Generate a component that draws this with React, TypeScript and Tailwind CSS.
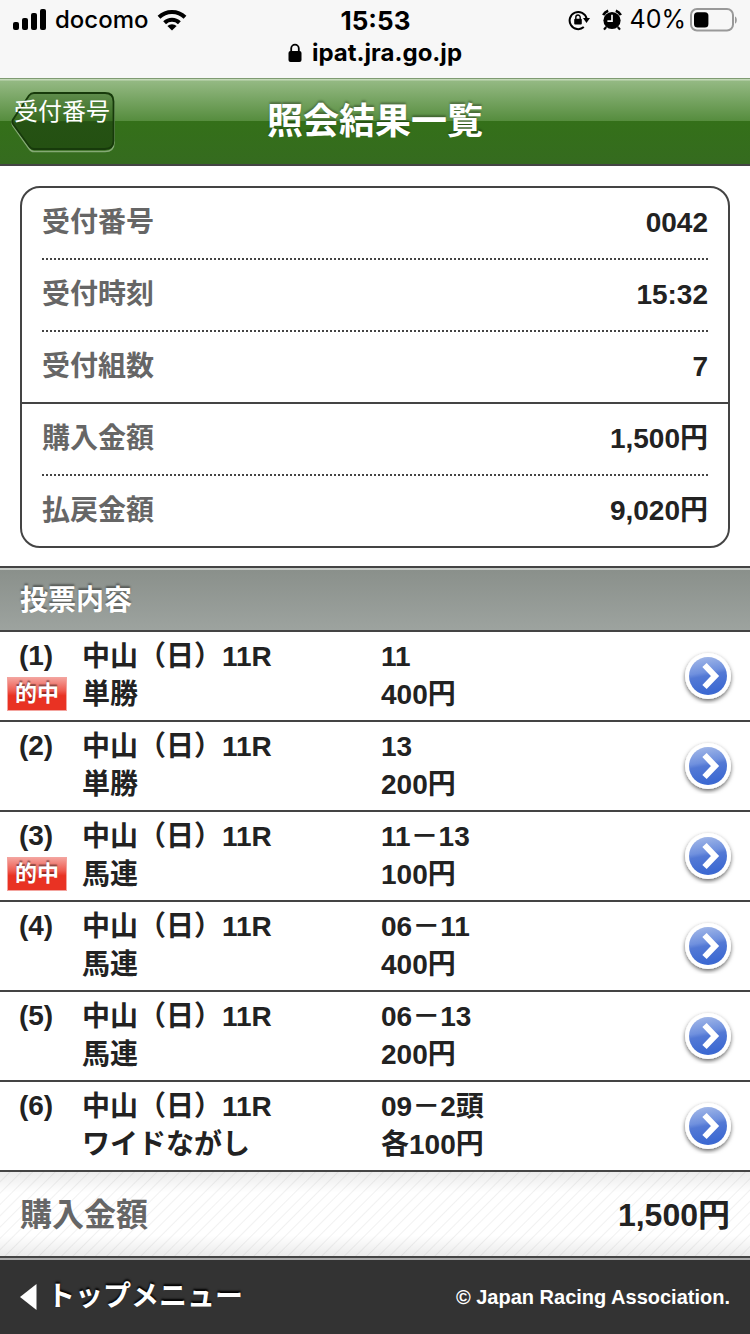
import type { ReactNode } from "react";

const jp = "font-['Liberation_Sans','Noto_Sans_CJK_JP',sans-serif]";

type Bet = {
  no: number;
  hit?: boolean;
  race: string;
  kind: string;
  pick: string;
  amount: string;
};

const bets: Bet[] = [
  { no: 1, hit: true, race: "中山（日）11R", kind: "単勝", pick: "11", amount: "400円" },
  { no: 2, race: "中山（日）11R", kind: "単勝", pick: "13", amount: "200円" },
  { no: 3, hit: true, race: "中山（日）11R", kind: "馬連", pick: "11－13", amount: "100円" },
  { no: 4, race: "中山（日）11R", kind: "馬連", pick: "06－11", amount: "400円" },
  { no: 5, race: "中山（日）11R", kind: "馬連", pick: "06－13", amount: "200円" },
  { no: 6, race: "中山（日）11R", kind: "ワイドながし", pick: "09－2頭", amount: "各100円" },
];

function SignalIcon() {
  return (
    <svg viewBox="0 0 34 22" className="h-[22px] w-[34px]" aria-hidden="true">
      <rect x="0" y="13" width="6" height="8" rx="2" />
      <rect x="9" y="9" width="6" height="12" rx="2" />
      <rect x="18" y="4" width="6" height="17" rx="2" />
      <rect x="27" y="0" width="6" height="21" rx="2" />
    </svg>
  );
}

function WifiIcon() {
  return (
    <svg viewBox="0 0 30 22" className="h-[22px] w-[30px]" aria-hidden="true">
      <path d="M15 21.5 10.4 17a6.6 6.6 0 0 1 9.2 0Z" />
      <path d="M7.6 13.8a10.6 10.6 0 0 1 14.8 0" fill="none" stroke="#000" strokeWidth="4" />
      <path d="M2 8.2a18.6 18.6 0 0 1 26 0" fill="none" stroke="#000" strokeWidth="4" />
    </svg>
  );
}

function RotationLockIcon() {
  return (
    <svg viewBox="0 0 22 22" className="h-[22px] w-[22px]" aria-hidden="true">
      <path d="M15.8 18.1A8.6 8.6 0 1 1 18.6 9.5" fill="none" stroke="#000" strokeWidth="2" />
      <path d="M15 9h7l-3.5 5Z" />
      <rect x="6.2" y="9.8" width="7.6" height="5.8" rx="1" />
      <path d="M7.8 10V8.2a2.2 2.2 0 0 1 4.4 0V10" fill="none" stroke="#000" strokeWidth="1.4" />
    </svg>
  );
}

function AlarmIcon() {
  return (
    <svg viewBox="0 0 20 22" className="h-[22px] w-5" aria-hidden="true">
      <circle cx="10" cy="11.5" r="8.6" />
      <path d="M4.2 18 2 20.6M15.8 18l2.2 2.6" stroke="#000" strokeWidth="2.2" />
      <path d="M1.2 6.2A9 9 0 0 1 6.2 1.8M13.8 1.8a9 9 0 0 1 5 4.4" fill="none" stroke="#000" strokeWidth="2.6" />
      <path d="M10 5.8v6.4H5.4" fill="none" stroke="#f7f7f7" strokeWidth="1.7" />
    </svg>
  );
}

function BatteryIcon() {
  return (
    <svg viewBox="0 0 48 24" className="h-6 w-12" aria-hidden="true">
      <rect x="1" y="1" width="42" height="21.5" rx="6" fill="none" stroke="#999" strokeWidth="2" />
      <rect x="4" y="4.2" width="14.4" height="15.2" rx="3.5" />
      <path d="M45 8.4c2.4 .8 2.4 6.4 0 7.2Z" fill="#999" />
    </svg>
  );
}

function LockIcon() {
  return (
    <svg viewBox="0 0 14 20" className="h-5 w-3.5" aria-hidden="true">
      <rect x="0.5" y="8" width="13" height="11" rx="2" />
      <path d="M3.2 9V5.5a3.8 3.8 0 0 1 7.6 0V9" fill="none" stroke="#000" strokeWidth="1.8" />
    </svg>
  );
}

function BackShape() {
  return (
    <svg viewBox="0 0 106 62" className="absolute inset-0 size-full" aria-hidden="true">
      <defs>
        <linearGradient id="back" x1="0" y1="0" x2="0" y2="1">
          <stop offset="0" stopColor="#5f8d4c" />
          <stop offset="0.5" stopColor="#376b20" />
          <stop offset="0.51" stopColor="#255213" />
          <stop offset="1" stopColor="#245012" />
        </linearGradient>
      </defs>
      <path
        d="M24 3.5h71q9 0 9 9v39q0 9-9 9H24q-3 0-5-3L3 35q-2-3 0-6L19 6q2-2.5 5-2.5Z"
        fill="none"
        stroke="#84a974"
        strokeWidth="1.5"
      />
      <path
        d="M24 2h71q8.5 0 8.5 8.5v39q0 8.5-8.5 8.5H24q-3 0-5-3L3 33q-1.5-2 0-4.5L19 4.5Q21 2 24 2Z"
        fill="url(#back)"
        stroke="#173a0b"
        strokeWidth="1.8"
      />
    </svg>
  );
}

function GoIcon() {
  return (
    <svg viewBox="0 0 56 56" className="size-14" aria-hidden="true">
      <defs>
        <linearGradient id="disc" x1="0" y1="0" x2="0.2" y2="1">
          <stop offset="0" stopColor="#a9bde9" />
          <stop offset="0.46" stopColor="#6f90de" />
          <stop offset="0.56" stopColor="#5379d5" />
          <stop offset="1" stopColor="#3c69d2" />
        </linearGradient>
        <filter id="shade" x="-20%" y="-20%" width="140%" height="150%">
          <feDropShadow dx="0" dy="2" stdDeviation="2" floodColor="#000" floodOpacity="0.6" />
        </filter>
      </defs>
      <circle cx="28" cy="28" r="23" fill="#fff" filter="url(#shade)" />
      <circle cx="28" cy="28" r="19" fill="url(#disc)" />
      <path d="M24.500 17 35 28 24.500 39" fill="none" stroke="#fff" strokeWidth="6" />
    </svg>
  );
}

function SummaryRow({ label, value, line }: { label: string; value: ReactNode; line: "dotted" | "solid" | "none" }) {
  const inner = "mx-5 flex items-center justify-between text-[28px] leading-[70px]";
  return (
    <div className={line === "solid" ? "border-b-2 border-[#444]" : ""}>
      <div className={line === "dotted" ? `${inner} border-b-2 border-dotted border-[#444]` : inner}>
        <dt className="text-[#666]">{label}</dt>
        <dd>{value}</dd>
      </div>
    </div>
  );
}

export default function App() {
  return (
    <div className={`flex min-h-screen flex-col bg-white font-bold text-[#222] ${jp}`}>
      <div className="bg-[#f7f7f7] pb-3 font-['Inter',sans-serif] text-black">
        <div className="grid h-10 grid-cols-3 items-center pr-3 pl-[13px]">
          <div className="flex items-center gap-2 text-[24px] font-medium">
            <SignalIcon />
            <span>docomo</span>
            <WifiIcon />
          </div>
          <time className="text-center text-[26px] font-bold">15:53</time>
          <div className="flex items-center justify-end gap-1 text-[25px] font-normal">
            <span className="flex gap-3 pr-1">
              <RotationLockIcon />
              <AlarmIcon />
            </span>
            <span>40%</span>
            <BatteryIcon />
          </div>
        </div>
        <div className="flex h-[26px] items-center justify-center gap-2.5 text-[24px] font-bold">
          <LockIcon />
          <span>ipat.jra.go.jp</span>
        </div>
      </div>

      <header className="grid h-[88px] grid-cols-[1fr_auto_1fr] items-center border-t border-b-2 border-t-[#7f9b72] border-b-[#444] bg-[linear-gradient(#c3d9b8_0,#c3d9b8_1px,#94b983_2px,#558c3d_50%,#347019_50%,#356b1f_100%)]">
        <a href="#receipt" className="relative ml-2.5 flex h-[62px] w-[106px] pl-1 font-normal text-white">
          <BackShape />
          <span className="relative text-[24px] leading-[42px] whitespace-nowrap">受付番号</span>
        </a>
        <h1 className="text-[36px] leading-[80px] text-white [text-shadow:0_-2px_2px_rgba(0,0,0,0.3)]">照会結果一覧</h1>
      </header>

      <main>
        <dl className="mx-5 mt-5 mb-[18px] rounded-[20px] border-2 border-[#444]">
          <SummaryRow label="受付番号" value="0042" line="dotted" />
          <SummaryRow label="受付時刻" value="15:32" line="dotted" />
          <SummaryRow label="受付組数" value="7" line="solid" />
          <SummaryRow label="購入金額" value="1,500円" line="dotted" />
          <SummaryRow label="払戻金額" value="9,020円" line="none" />
        </dl>

        <h2 className="border-y-2 border-[#444] bg-[linear-gradient(#c5c9c5_0,#c5c9c5_2px,#8a908b_2px,#9da39f_100%)] px-5 pt-1 text-[28px] leading-[58px] text-white [text-shadow:0_-2px_2px_rgba(0,0,0,0.4)]">
          投票内容
        </h2>

        <ul>
          {bets.map((bet) => (
            <li key={bet.no} className="border-b-2 border-[#444]">
              <a
                href={`#bet-${bet.no}`}
                className="grid h-[88px] grid-cols-[74px_1fr_1fr_56px] items-center gap-x-2 pr-3.5 text-[28px] leading-[38px]"
              >
                <span className="flex h-[78px] flex-col items-center gap-0.5">
                  <span className="pr-0.5">({bet.no})</span>
                  {bet.hit && (
                    <span className="h-[34px] w-[60px] border border-[#f3a49f] bg-[linear-gradient(#f4a19b_0,#ee5a4f_40%,#e93223_55%,#e93223_100%)] text-center text-[22px] leading-8 text-white [text-shadow:0_-2px_1px_rgba(0,0,0,0.4)]">
                      的中
                    </span>
                  )}
                </span>
                <span>
                  {bet.race}
                  <br />
                  {bet.kind}
                </span>
                <span>
                  {bet.pick}
                  <br />
                  {bet.amount}
                </span>
                <GoIcon />
              </a>
            </li>
          ))}
        </ul>

        <dl className="flex items-center justify-between bg-[linear-gradient(rgba(0,0,0,0.08),transparent_25%,transparent_75%,rgba(0,0,0,0.08)),repeating-linear-gradient(135deg,#fff_0,#fff_6px,#f1f1f1_7px,#fff_8px)] px-5 pt-0.5 text-[32px] leading-[82px]">
          <dt className="text-[#666]">購入金額</dt>
          <dd>1,500円</dd>
        </dl>
      </main>

      <footer className="flex grow items-center justify-between border-t-2 border-[#444] bg-[linear-gradient(#aaa_0,#aaa_2px,#333_2px,#333_100%)] px-5 pt-0.5 text-white">
        <a href="#top" className="flex items-center gap-2.5 text-[28px] leading-[74px] [text-shadow:0_-2px_2px_#000]">
          <svg viewBox="0 0 17 26" className="h-[26px] w-[17px]" fill="#fff" aria-hidden="true">
            <path d="M0 13 16.5 0v26Z" />
          </svg>
          トップメニュー
        </a>
        <small className="text-[20px] leading-[74px]">© Japan Racing Association.</small>
      </footer>
    </div>
  );
}
